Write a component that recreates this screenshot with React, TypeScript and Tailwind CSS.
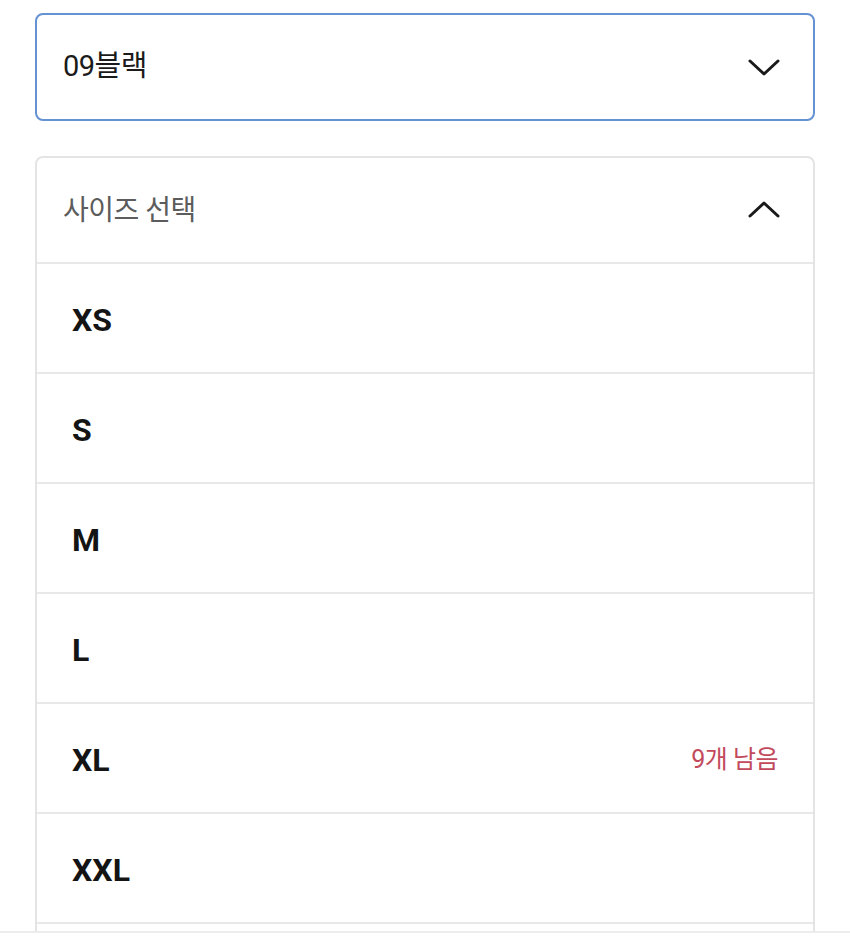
import React, { useState } from 'react';

const sizes: { label: string; note?: string }[] = [
  { label: 'XS' },
  { label: 'S' },
  { label: 'M' },
  { label: 'L' },
  { label: 'XL', note: '9개 남음' },
  { label: 'XXL' },
  { label: '' },
];

const Chevron: React.FC<{ up?: boolean }> = ({ up }) => (
  <svg width="34" height="20" viewBox="0 0 34 20" fill="none" className="shrink-0">
    <path
      d={up ? 'M3 17 L17 4 L31 17' : 'M3 4 L17 17 L31 4'}
      stroke="#1a1a1a"
      strokeWidth="3"
      strokeLinecap="round"
      strokeLinejoin="round"
    />
  </svg>
);

const App: React.FC = () => {
  const [selected, setSelected] = useState<string | null>(null);

  return (
    <div
      className="h-[942px] flex flex-col bg-white overflow-hidden"
      style={{ fontFamily: 'Roboto, "Noto Sans CJK KR", sans-serif' }}
    >
      <div className="flex-1 overflow-hidden px-[35px] pt-[13px]">
        {/* colour select */}
        <button className="w-full h-[108px] flex items-center justify-between pl-[26px] pr-[32px] border-2 border-[#6592d2] rounded-[8px] bg-white">
          <span className="text-[29px] text-[#1b1b1b] tracking-[-0.5px]">09블랙</span>
          <Chevron />
        </button>

        {/* size list */}
        <div className="mt-[35px] border-2 border-[#e4e4e4] rounded-[8px] bg-white">
          <div className="h-[104px] flex items-center justify-between pl-[26px] pr-[32px] pt-[2px]">
            <span className="text-[28px] text-[#5c5c5c] tracking-[-0.5px]">사이즈 선택</span>
            <span className="-mt-[4px]">
              <Chevron up />
            </span>
          </div>
          {sizes.map((s, i) => (
            <div
              key={i}
              onClick={() => setSelected(s.label)}
              className={`h-[110px] flex items-center justify-between pl-[35px] pr-[35px] pt-[4px] border-t-2 border-[#e8e8e8] ${
                s.label && selected === s.label ? 'bg-gray-50' : 'bg-white'
              }`}
            >
              <span className="text-[32px] font-bold text-[#141414]">{s.label}</span>
              {s.note && <span className="text-[25px] text-[#c24a5c] tracking-[-0.5px]">{s.note}</span>}
            </div>
          ))}
        </div>
      </div>
      <div className="h-[11px] border-t-2 border-[#ececec] bg-white" />
    </div>
  );
};

export default App;
